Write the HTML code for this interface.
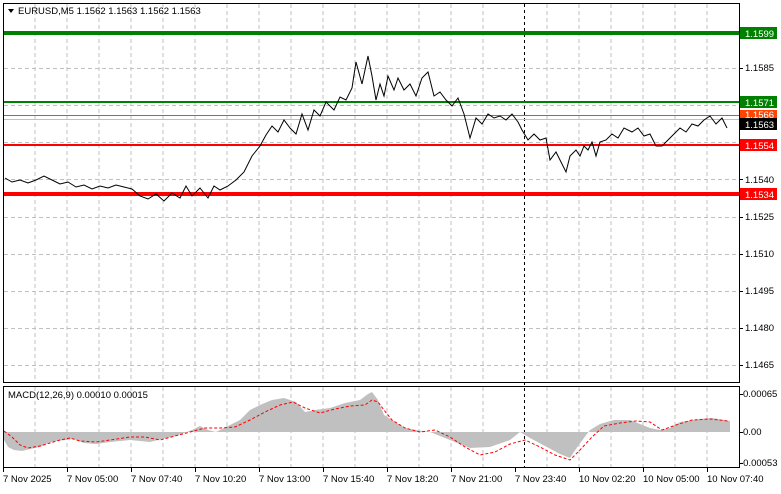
<!DOCTYPE html>
<html><head><style>
body{margin:0;width:781px;height:489px;background:#fff;overflow:hidden;font-family:"Liberation Sans",sans-serif}
</style></head><body>
<svg width="781" height="489" xmlns="http://www.w3.org/2000/svg" font-family="Liberation Sans, sans-serif" font-size="10">
<rect width="781" height="489" fill="#fff"/>
<g stroke="#c0c0c0" stroke-dasharray="4,3" stroke-width="1">
<path d="M35 4V382M67 4V382M99 4V382M131 4V382M163 4V382M195 4V382M227 4V382M259 4V382M291 4V382M323 4V382M355 4V382M387 4V382M419 4V382M451 4V382M483 4V382M547 4V382M579 4V382M611 4V382M643 4V382M675 4V382M707 4V382"/>
<path d="M35 387V467M67 387V467M99 387V467M131 387V467M163 387V467M195 387V467M227 387V467M259 387V467M291 387V467M323 387V467M355 387V467M387 387V467M419 387V467M451 387V467M483 387V467M547 387V467M579 387V467M611 387V467M643 387V467M675 387V467M707 387V467"/>
<path d="M4 68.5H739M4 105.5H739M4 142.5H739M4 179.5H739M4 217.5H739M4 254.5H739M4 291.5H739M4 328.5H739M4 365.5H739"/>
</g>
<path d="M524.5 4V467" stroke="#000" stroke-dasharray="3,3"/>
<rect x="3.5" y="3.5" width="736" height="379" fill="none" stroke="#000"/>
<rect x="3.5" y="386.5" width="736" height="81" fill="none" stroke="#000"/>
<line x1="4" y1="33" x2="739" y2="33" stroke="#008000" stroke-width="4"/>
<line x1="4" y1="102" x2="739" y2="102" stroke="#008000" stroke-width="2"/>
<line x1="4" y1="115.5" x2="739" y2="115.5" stroke="#ff4500" stroke-width="1"/>
<line x1="4" y1="119.5" x2="739" y2="119.5" stroke="#c0c0c0" stroke-width="1"/>
<line x1="4" y1="145" x2="739" y2="145" stroke="#ff0000" stroke-width="2"/>
<line x1="4" y1="194" x2="739" y2="194" stroke="#ff0000" stroke-width="4"/>
<polyline fill="none" stroke="#000" stroke-width="1" points="5,178 12,182 20,180 28,183 36,180 44,176 52,180 60,184 68,182 76,187 84,185 92,189 100,186 108,188 116,185 124,187 132,189 140,196 148,199 156,194 164,201 172,193 180,198 186,186 192,196 200,188 208,198 214,186 220,190 228,186 236,180 244,172 252,156 260,146 266,135 272,126 278,132 284,120 290,128 296,134 302,114 308,130 314,110 320,116 326,102 334,110 340,97 346,100 352,88 356,62 362,84 368,56 372,76 376,100 380,84 384,96 388,76 394,90 398,78 404,90 410,84 416,96 422,78 428,72 434,96 440,92 446,100 452,106 458,98 464,114 470,138 476,118 482,124 488,114 494,118 500,116 506,120 512,114 518,122 522,130 528,140 534,134 540,140 546,138 550,160 556,152 562,164 566,172 570,156 576,150 580,156 584,146 588,150 592,142 596,156 600,142 606,140 612,134 618,138 624,128 632,132 638,128 644,136 650,134 656,146 662,146 668,140 674,134 680,128 686,132 692,124 698,126 704,120 710,116 716,124 722,118 727,128"/>
<!-- MACD -->
<polygon fill="#c0c0c0" points="4,432 4,440 8,447 14,450 22,451 30,449 40,447 48,443 56,441 66,440 74,439 84,443 96,444 110,442 130,440 150,442 162,439 176,436 192,430 200,426 208,430 216,432 230,425 240,420 250,410 260,405 272,400 284,398 296,402 305,412 315,410 330,408 345,403 360,400 368,394 372,392 378,400 384,415 395,422 405,428 415,430 430,432 450,440 470,448 490,447 510,440 520,432 530,438 545,446 560,454 570,458 578,446 590,430 600,424 614,420 630,420 640,424 650,428 660,430 670,428 680,422 700,419 712,418 724,420 730,421 730,432"/>
<polyline fill="none" stroke="#ff0000" stroke-dasharray="3,2" stroke-width="1" points="4,431 12,437 20,445 28,448 40,446 50,443 60,440 70,438 80,441 96,442 110,440 130,437 145,437 160,440 175,436 190,432 205,428 220,428 235,427 250,420 265,412 280,405 293,402 305,408 320,413 335,409 350,406 365,405 372,400 378,402 384,410 392,420 405,428 420,432 435,430 450,437 465,447 480,455 495,452 510,444 525,440 540,447 555,455 570,460 580,450 592,437 604,426 620,423 636,421 650,422 662,430 676,425 692,420 710,419 728,421"/>
<!-- labels -->
<g font-size="9.5">
<path d="M8 9h6l-3 4z" fill="#000"/>
<text x="18" y="14">EURUSD,M5  1.1562 1.1563 1.1562 1.1563</text>
<text x="8" y="398">MACD(12,26,9) 0.00010 0.00015</text>
</g>
<g font-size="9.5" fill="#000">
<text x="745" y="71">1.1585</text>
<text x="745" y="183">1.1540</text>
<text x="745" y="220">1.1525</text>
<text x="745" y="257">1.1510</text>
<text x="745" y="294">1.1495</text>
<text x="745" y="331">1.1480</text>
<text x="745" y="368">1.1465</text>
<text x="743" y="397">0.00065</text>
<text x="743" y="435">0.00</text>
<text x="740" y="466">-0.00053</text>
</g>
<g stroke="#000"><path d="M739 68.5h4M739 179.5h4M739 217.5h4M739 254.5h4M739 291.5h4M739 328.5h4M739 365.5h4M739 394.5h4M739 432.5h4M739 463.5h4"/></g>
<rect x="740" y="27" width="37" height="12" fill="#008000"/><text x="745" y="37" font-size="9.5" fill="#fff">1.1599</text>
<rect x="740" y="96" width="37" height="12" fill="#008000"/><text x="745" y="106" font-size="9.5" fill="#fff">1.1571</text>
<rect x="740" y="110" width="37" height="8" fill="#ff4500"/><text x="745" y="118" font-size="9.5" fill="#fff">1.1566</text>
<rect x="740" y="118" width="37" height="12" fill="#000"/><text x="745" y="128" font-size="9.5" fill="#fff">1.1563</text>
<rect x="740" y="139" width="37" height="12" fill="#ff0000"/><text x="745" y="149" font-size="9.5" fill="#fff">1.1554</text>
<rect x="740" y="188" width="37" height="12" fill="#ff0000"/><text x="745" y="198" font-size="9.5" fill="#fff">1.1534</text>
<g font-size="9.5" fill="#000">
<text x="3" y="482">7 Nov 2025</text>
<text x="67" y="482">7 Nov 05:00</text>
<text x="131" y="482">7 Nov 07:40</text>
<text x="195" y="482">7 Nov 10:20</text>
<text x="259" y="482">7 Nov 13:00</text>
<text x="323" y="482">7 Nov 15:40</text>
<text x="387" y="482">7 Nov 18:20</text>
<text x="451" y="482">7 Nov 21:00</text>
<text x="515" y="482">7 Nov 23:40</text>
<text x="579" y="482">10 Nov 02:20</text>
<text x="643" y="482">10 Nov 05:00</text>
<text x="707" y="482">10 Nov 07:40</text>
</g>
<g stroke="#000"><path d="M3.5 468v4M67.5 468v4M131.5 468v4M195.5 468v4M259.5 468v4M323.5 468v4M387.5 468v4M451.5 468v4M515.5 468v4M579.5 468v4M643.5 468v4M707.5 468v4"/></g>
</svg>
</body></html>
